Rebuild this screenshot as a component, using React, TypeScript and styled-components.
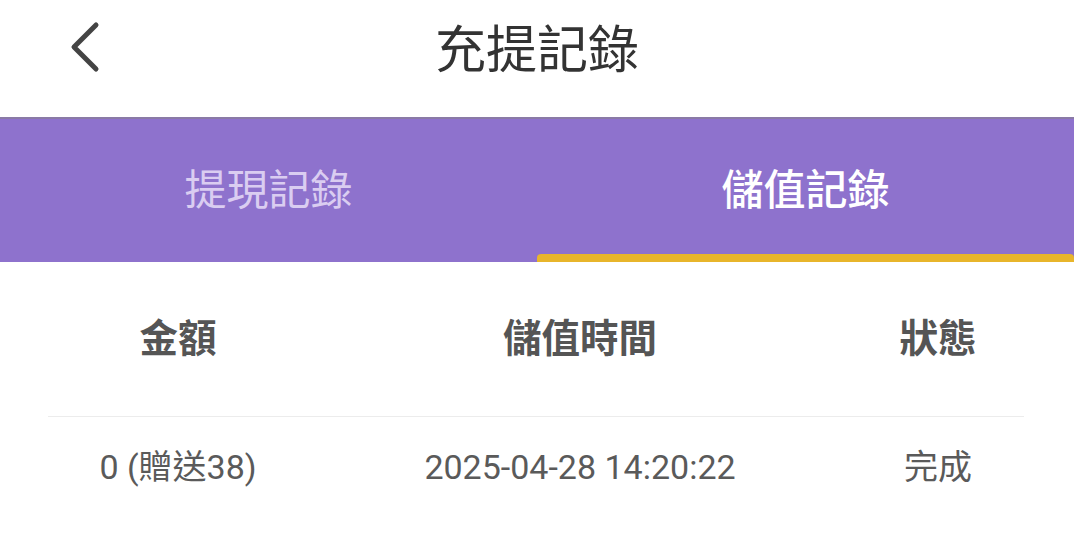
import * as React from 'react';
import styled, {createGlobalStyle} from 'styled-components';

const GlobalStyle = createGlobalStyle`
  html, body {
    margin: 0;
    padding: 0;
    background: #ffffff;
  }
  body {
    font-family: Roboto, "Noto Sans CJK TC", "Noto Sans", sans-serif;
  }
`;

const Page = styled.div`
  width: 1074px;
  height: 555px;
  overflow: hidden;
  background: #ffffff;
`;

const Header = styled.header`
  position: relative;
  height: 117px;
  display: flex;
  align-items: center;
  justify-content: center;
`;

const BackButton = styled.button`
  position: absolute;
  left: 56px;
  top: 14px;
  width: 56px;
  height: 66px;
  border: none;
  background: none;
  padding: 0;
  display: flex;
  align-items: center;
  justify-content: center;
`;

const Title = styled.h1`
  margin: 0 0 24px;
  font-family: "Noto Sans CJK TC", sans-serif;
  font-weight: 400;
  font-size: 51px;
  line-height: 1;
  color: #333333;
`;

const TabBar = styled.nav`
  height: 145px;
  display: flex;
  background: #8e72cd;
  border-top: 2px solid #8a7aa6;
  box-sizing: border-box;
`;

const Tab = styled.div<{$active?: boolean}>`
  position: relative;
  flex: 1;
  display: flex;
  align-items: center;
  justify-content: center;
  padding-bottom: 8px;
  font-family: "Noto Sans CJK TC", sans-serif;
  font-size: 42px;
  font-weight: ${p => (p.$active ? 500 : 400)};
  color: ${p => (p.$active ? '#ffffff' : '#dacdf1')};

  &::after {
    content: '';
    display: ${p => (p.$active ? 'block' : 'none')};
    position: absolute;
    left: 0;
    right: 0;
    bottom: 0;
    height: 8px;
    border-radius: 4px 4px 0 0;
    background: #e8b52b;
  }
`;

const Table = styled.div`
  margin: 0 50px 0 48px;
`;

const Row = styled.div<{$head?: boolean}>`
  display: grid;
  grid-template-columns: 260px 544px 172px;
  align-items: center;
  height: ${p => (p.$head ? '154px' : '100px')};
  border-bottom: ${p => (p.$head ? '1px solid #ececec' : 'none')};
`;

const Cell = styled.div<{$head?: boolean}>`
  text-align: center;
  font-family: Roboto, "Noto Sans CJK TC", sans-serif;
  font-size: ${p => (p.$head ? '38.5px' : '34px')};
  font-weight: ${p => (p.$head ? 700 : 400)};
  color: ${p => (p.$head ? '#555555' : '#5a5a5a')};
  line-height: 1;
`;

function ChevronLeft() {
  return (
    <svg width="40" height="56" viewBox="0 0 40 56" fill="none">
      <path d="M32 6 L10 28 L32 50" stroke="#444444" strokeWidth="5" strokeLinecap="round" strokeLinejoin="round" />
    </svg>
  );
}

const records = [
  {amount: '0 (贈送38)', time: '2025-04-28 14:20:22', status: '完成'},
];

export default function App() {
  return (
    <Page>
      <GlobalStyle />
      <Header>
        <BackButton aria-label="back"><ChevronLeft /></BackButton>
        <Title>充提記錄</Title>
      </Header>
      <TabBar>
        <Tab>提現記錄</Tab>
        <Tab $active>儲值記錄</Tab>
      </TabBar>
      <Table>
        <Row $head>
          <Cell $head>金額</Cell>
          <Cell $head>儲值時間</Cell>
          <Cell $head>狀態</Cell>
        </Row>
        {records.map((r, i) => (
          <Row key={i}>
            <Cell>{r.amount}</Cell>
            <Cell>{r.time}</Cell>
            <Cell>{r.status}</Cell>
          </Row>
        ))}
      </Table>
    </Page>
  );
}
